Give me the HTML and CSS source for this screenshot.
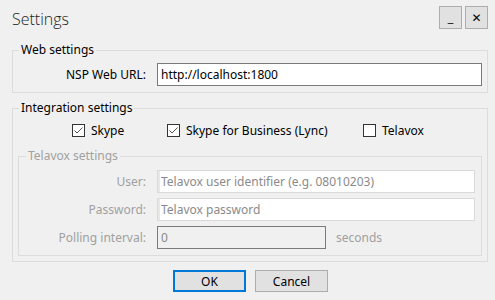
FILE: index.html
```html
<!DOCTYPE html>
<html lang="en">
<head>
  <meta charset="UTF-8">
  <title>Settings</title>
  <link rel="stylesheet" href="styles.css">
</head>
<body>
  <div class="dialog">
    <!-- Title bar -->
    <header class="titlebar">
      <h1>Settings</h1>
      <div class="win-buttons">
        <button class="win-btn">_</button>
        <button class="win-btn close">&#x2715;</button>
      </div>
    </header>

    <!-- Web settings -->
    <fieldset class="group web">
      <legend>Web settings</legend>
      <div class="row">
        <label for="url">NSP Web URL:</label>
        <input type="text" id="url" class="field url" value="http://localhost:1800">
      </div>
    </fieldset>

    <!-- Integration settings -->
    <fieldset class="group integration">
      <legend>Integration settings</legend>
      <div class="checks">
        <label class="check"><span class="box checked"><svg viewBox="0 0 11 11" width="11" height="11"><path d="M1.5 5.5 L4 8 L9.5 2.5" fill="none" stroke="#555" stroke-width="1"/></svg></span>Skype</label>
        <label class="check"><span class="box checked"><svg viewBox="0 0 11 11" width="11" height="11"><path d="M1.5 5.5 L4 8 L9.5 2.5" fill="none" stroke="#555" stroke-width="1"/></svg></span>Skype for Business (Lync)</label>
        <label class="check"><span class="box"></span>Telavox</label>
      </div>

      <fieldset class="group telavox" disabled>
        <legend>Telavox settings</legend>
        <div class="row">
          <label for="user">User:</label>
          <input type="text" id="user" class="field wide" placeholder="Telavox user identifier (e.g. 08010203)">
        </div>
        <div class="row">
          <label for="pass">Password:</label>
          <input type="text" id="pass" class="field wide" placeholder="Telavox password">
        </div>
        <div class="row">
          <label for="poll">Polling interval:</label>
          <input type="text" id="poll" class="field poll" value="0">
          <span class="unit">seconds</span>
        </div>
      </fieldset>
    </fieldset>

    <div class="actions">
      <button class="btn ok">OK</button>
      <button class="btn">Cancel</button>
    </div>
  </div>
</body>
</html>
```

FILE: styles.css
```css
/* General Styles */
body {
  margin: 0;
  background-color: #f0f0f0;
  font-family: 'Noto Sans', 'Open Sans', sans-serif;
  font-size: 12px;
  color: #000;
}

.dialog {
  width: 495px;
  height: 300px;
  overflow: hidden;
}

/* Title bar */
.titlebar {
  height: 42px;
  display: flex;
  justify-content: space-between;
  align-items: flex-start;
  padding: 0 7px 0 12px;
  box-sizing: border-box;
}

.titlebar h1 {
  margin: 8px 0 0;
  font-family: 'Open Sans', sans-serif;
  font-weight: 300;
  font-size: 16px;
  color: #222;
}

.win-buttons {
  display: flex;
  gap: 3px;
  margin-top: 6px;
}

.win-btn {
  width: 23px;
  height: 23px;
  padding: 0;
  background-color: #e1e1e1;
  border: 1px solid #adadad;
  font-family: 'DejaVu Sans', sans-serif;
  font-size: 11px;
  color: #000;
}

.win-btn.close {
  font-size: 12px;
  font-weight: bold;
}

/* Group boxes */
.group {
  margin: 0 7px 0 12px;
  padding: 5px 5px 6px 0;
  border: 1px solid #dcdcdc;
  min-width: 0;
}

.group legend {
  padding: 0 2px;
  margin-left: 6px;
  line-height: 16px;
}

.integration {
  margin-top: 7px;
  padding: 4px 0 5px 0;
}

.row {
  display: flex;
  align-items: center;
}

.row label {
  width: 133px;
  margin-right: 11px;
  text-align: right;
}

.field {
  height: 23px;
  box-sizing: border-box;
  border: 1px solid #7a7a7a;
  background-color: #fff;
  font-family: inherit;
  font-size: 12px;
  padding: 0 3px;
  color: #000;
}

.url {
  width: 325px;
}

/* Checkboxes */
.checks {
  display: grid;
  grid-template-columns: 95px 196px auto;
  padding-left: 59px;
  height: 20px;
  align-items: center;
}

.check {
  display: flex;
  align-items: center;
  gap: 6px;
}

.box {
  width: 13px;
  height: 13px;
  box-sizing: border-box;
  border: 1px solid #333;
  background-color: #fff;
  display: flex;
  align-items: center;
  justify-content: center;
}

/* Telavox (disabled) */
.telavox {
  margin: 8px 5px 0 5px;
  padding: 6px 6px 6px 0;
  color: #a0a0a0;
}

.telavox legend {
  margin-left: 7px;
}

.telavox .row + .row {
  margin-top: 5px;
}

.telavox .row label {
  width: 127px;
}

.telavox .wide {
  width: 318px;
  border-color: #d9d9d9;
  box-shadow: inset 2px 0 0 #e8e8e8;
}

.telavox .field::placeholder {
  color: #8a8a8a;
}

.telavox .poll {
  width: 169px;
  background-color: #f0f0f0;
  border-color: #7a7a7a;
  color: #8a8a8a;
}

.unit {
  margin-left: 10px;
}

/* Dialog buttons */
.actions {
  display: flex;
  gap: 9px;
  margin-top: 8px;
  padding-left: 173px;
}

.btn {
  width: 73px;
  height: 22px;
  background-color: #e1e1e1;
  border: 1px solid #adadad;
  font-family: inherit;
  font-size: 12px;
  color: #000;
  padding: 0;
}

.btn.ok {
  border: 2px solid #0078d7;
}
```
